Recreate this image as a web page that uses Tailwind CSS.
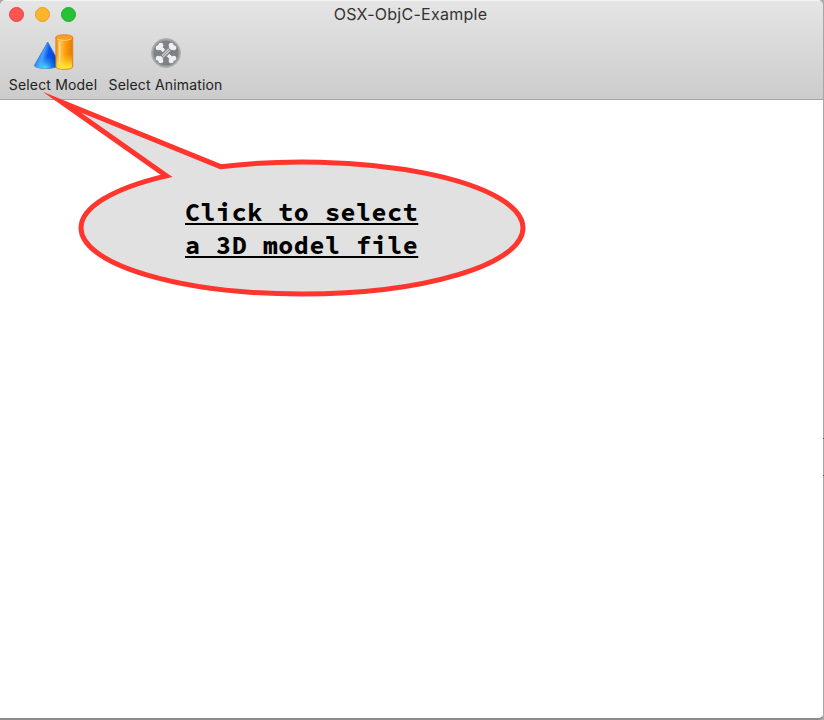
<!DOCTYPE html>
<html lang="en">
<head>
<meta charset="utf-8">
<title>OSX-ObjC-Example</title>
<script src="https://cdn.jsdelivr.net/npm/@tailwindcss/browser@4"></script>
</head>
<body class="relative bg-[#aaaaaa] font-[Inter,sans-serif]">
<main class="relative flex h-[720px] w-[824px] flex-col overflow-hidden rounded-t-md rounded-br-md border-r border-b-2 border-r-[#a6a6a6] border-b-[#8b8b8b] bg-white">
  <header class="h-[100px] shrink-0 border-t border-b border-t-[#f3f3f3] border-b-[#a5a5a5] bg-linear-to-b from-[#e5e5e5] to-[#cccccc]">
    <div class="grid h-7 grid-cols-[1fr_auto_1fr] items-center">
      <div class="-mt-px flex gap-[11px] pl-[9px]">
        <span class="size-[15px] rounded-full border border-[#e2443f] bg-[#ff5550]"></span>
        <span class="size-[15px] rounded-full border border-[#dfa02b] bg-[#ffb52b]"></span>
        <span class="size-[15px] rounded-full border border-[#20a832] bg-[#25c236]"></span>
      </div>
      <h1 class="-mt-0.5 -ml-0.5 text-[16px] tracking-[0.27px] whitespace-nowrap text-[#333333]">OSX-ObjC-Example</h1>
    </div>
    <nav class="flex gap-[11px] pt-[3px] pl-[9px] text-[14px] leading-5 tracking-[0.17px] text-[#222222]">
      <div class="flex w-[88px] flex-col items-center gap-[3px] whitespace-nowrap">
        <svg width="42" height="40" viewBox="-.5 0 42 40">
          <defs>
            <linearGradient id="cone" x1="0" y1="0" x2="1" y2=".25"><stop offset="0" stop-color="#0763e8"/><stop offset=".42" stop-color="#4c9fff"/><stop offset=".6" stop-color="#0757f0"/><stop offset="1" stop-color="#063fbd"/></linearGradient>
            <radialGradient id="glow" cx=".4" cy="1" r=".5"><stop offset="0" stop-color="#5de5ff"/><stop offset="1" stop-color="#279fff" stop-opacity="0"/></radialGradient>
            <linearGradient id="tube"><stop offset="0" stop-color="#f08a0c"/><stop offset=".25" stop-color="#ffc45c"/><stop offset=".55" stop-color="#ff9d0b"/><stop offset="1" stop-color="#e27a00"/></linearGradient>
            <linearGradient id="gold" x1="0" y1="0" x2="0" y2="1"><stop offset=".45" stop-color="#ffcb16" stop-opacity="0"/><stop offset=".93" stop-color="#ffe53a"/></linearGradient>
          </defs>
          <path d="M15.2 10 L1.8 33.5 C3 37.5 24 37.5 28 33Z" fill="url(#cone)" stroke="#2468bb" stroke-width=".6"/>
          <path d="M15.2 10 L1.8 33.5 C3 37.5 24 37.5 28 33Z" fill="url(#glow)"/>
          <path d="M23.3 5.2v29.3c0 4 17 4 17 0V5.2Z" fill="url(#tube)" stroke="#d68220" stroke-width=".7"/>
          <path d="M24 10v24.5c0 3.2 15.6 3.2 15.6 0V10Z" fill="url(#gold)"/>
          <path d="M27 10v22" stroke="#fff0a0" stroke-width="1.8" opacity=".55"/>
          <ellipse cx="31.8" cy="5.2" rx="8.4" ry="2.5" fill="#ff9e22" stroke="#e8780c" stroke-width=".8"/>
          <path d="M24.5 6.7c3 2 11.5 2 14.6 0" fill="none" stroke="#ffe0a0" stroke-width="1"/>
        </svg>
        <span>Select Model</span>
      </div>
      <div class="flex w-[115px] flex-col items-center gap-[3px] whitespace-nowrap">
        <svg width="42" height="40" viewBox="0 0 42 40">
          <circle cx="21" cy="21" r="14.5" fill="#a0a2a4" stroke="#b0b1b2"/>
          <circle cx="21" cy="21" r="12.6" fill="#7f8284"/>
          <g stroke="#eef0f1" fill="#eef0f1" stroke-width="3.5"><path d="M14 14 28 28M28 14 14 28"/>
            <g stroke="none"><circle cx="15.8" cy="13.2" r="2.5"/><circle cx="13.2" cy="15.8" r="2.5"/><circle cx="26.2" cy="13.2" r="2.5"/><circle cx="28.8" cy="15.8" r="2.5"/><circle cx="15.8" cy="28.8" r="2.5"/><circle cx="13.2" cy="26.2" r="2.5"/><circle cx="26.2" cy="28.8" r="2.5"/><circle cx="28.8" cy="26.2" r="2.5"/></g>
          </g>
          <path d="m17 25 8-8" stroke="#7f8284" stroke-width="6"/>
          <path d="m17 23.7 6.7-6.7M18.3 25 25 18.3" stroke="#d5d8da" stroke-width="1.1"/>
        </svg>
        <span>Select Animation</span>
      </div>
    </nav>
  </header>
  <section class="flex-1 bg-white"></section>
  <aside class="absolute top-[90px] left-[40px] h-[210px] w-[490px]">
    <svg class="absolute inset-0" width="490" height="210" viewBox="40 90 490 210">
      <path d="M220.5 166.65 L62 102.2 L166.5 175.86 A221 66 0 0 0 81 228 A221 66 0 0 0 523 228 A221 66 0 0 0 220.5 166.65Z" fill="#e1e1e1" stroke="#ff352e" stroke-width="5" stroke-miterlimit="20"/>
    </svg>
    <p class="relative pt-[106px] pl-[145px] font-['Source_Code_Pro','DejaVu_Sans_Mono',monospace] text-[25px] leading-[33px] font-bold tracking-[0.55px] text-black underline decoration-2 underline-offset-[2px]">Click to select<br>a 3D model file</p>
  </aside>
</main>
<i class="absolute top-[438px] left-[823px] h-px w-px bg-[#555555]"></i>
<i class="absolute top-[475px] left-[823px] h-px w-px bg-[#555555]"></i>
</body>
</html>
